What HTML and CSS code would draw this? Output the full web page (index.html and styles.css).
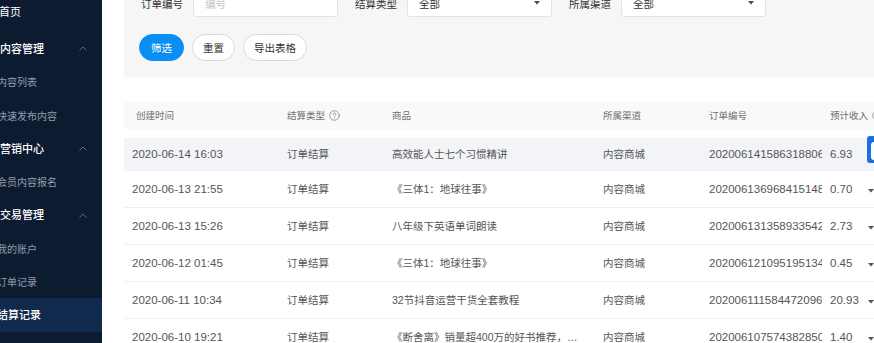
FILE: index.html
```html
<!DOCTYPE html>
<html lang="zh-CN">
<head>
  <meta charset="UTF-8" />
  <meta name="viewport" content="width=device-width, initial-scale=1.0"/>
  <title>结算记录</title>
  <link rel="stylesheet" href="styles.css">
</head>
<body>
  <div class="layout">
    <aside class="sidebar">
      <ul class="menu">
        <li class="menu-home">首页</li>
        <li class="menu-title">内容管理
          <svg class="caret" viewBox="0 0 8 5" width="8" height="5"><polyline points="0.5,4.5 4,1 7.5,4.5" /></svg>
        </li>
        <li class="menu-sub">内容列表</li>
        <li class="menu-sub">快速发布内容</li>
        <li class="menu-title">营销中心
          <svg class="caret" viewBox="0 0 8 5" width="8" height="5"><polyline points="0.5,4.5 4,1 7.5,4.5" /></svg>
        </li>
        <li class="menu-sub">会员内容报名</li>
        <li class="menu-title">交易管理
          <svg class="caret" viewBox="0 0 8 5" width="8" height="5"><polyline points="0.5,4.5 4,1 7.5,4.5" /></svg>
        </li>
        <li class="menu-sub">我的账户</li>
        <li class="menu-sub">订单记录</li>
        <li class="menu-sub active">结算记录</li>
        <li class="menu-sub">提现记录</li>
      </ul>
    </aside>

    <main class="main">
      <section class="filter-panel">
        <div class="filter-row">
          <div class="field">
            <label>订单编号</label>
            <input type="text" class="control" placeholder="编号" />
          </div>
          <div class="field">
            <label>结算类型</label>
            <div class="control select">全部
              <svg class="arrow" viewBox="0 0 6 4" width="6" height="4"><polygon points="0,0 6,0 3,3.6" /></svg>
            </div>
          </div>
          <div class="field">
            <label>所属渠道</label>
            <div class="control select">全部
              <svg class="arrow" viewBox="0 0 6 4" width="6" height="4"><polygon points="0,0 6,0 3,3.6" /></svg>
            </div>
          </div>
        </div>
        <div class="filter-actions">
          <button class="btn btn-primary">筛选</button>
          <button class="btn">重置</button>
          <button class="btn">导出表格</button>
        </div>
      </section>

      <table class="records">
        <colgroup>
          <col style="width:155px">
          <col style="width:105px">
          <col style="width:211px">
          <col style="width:106px">
          <col style="width:121px">
          <col style="width:41px">
          <col style="width:60px">
        </colgroup>
        <thead>
          <tr>
            <th class="first">创建时间</th>
            <th>结算类型
              <svg class="help" viewBox="0 0 12 12" width="11" height="11"><circle cx="6" cy="6" r="5.2" /><path d="M4.5 4.8a1.5 1.5 0 1 1 2.2 1.3c-.5.3-.7.5-.7 1.1v.3" /><circle class="dot" cx="6" cy="8.9" r="0.55" /></svg>
            </th>
            <th>商品</th>
            <th>所属渠道</th>
            <th>订单编号</th>
            <th class="spill">预计收入
              <svg class="help" viewBox="0 0 12 12" width="11" height="11"><circle cx="6" cy="6" r="5.2" /><path d="M4.5 4.8a1.5 1.5 0 1 1 2.2 1.3c-.5.3-.7.5-.7 1.1v.3" /><circle class="dot" cx="6" cy="8.9" r="0.55" /></svg>
            </th>
            <th></th>
          </tr>
        </thead>
        <tbody>
          <tr class="hover">
            <td class="num">2020-06-14 16:03</td>
            <td>订单结算</td>
            <td class="product">高效能人士七个习惯精讲</td>
            <td>内容商城</td>
            <td class="num">20200614158631880612</td>
            <td class="num">6.93</td>
            <td class="op"><span class="op-btn"><span></span></span></td>
          </tr>
          <tr>
            <td class="num">2020-06-13 21:55</td>
            <td>订单结算</td>
            <td class="product">《三体1：地球往事》</td>
            <td>内容商城</td>
            <td class="num">20200613696841514862</td>
            <td class="num">0.70</td>
            <td class="op"><svg class="more" viewBox="0 0 6 4" width="6" height="4"><polygon points="0,0 6,0 3,3.6" /></svg></td>
          </tr>
          <tr>
            <td class="num">2020-06-13 15:26</td>
            <td>订单结算</td>
            <td class="product">八年级下英语单词朗读</td>
            <td>内容商城</td>
            <td class="num">20200613135893354271</td>
            <td class="num">2.73</td>
            <td class="op"><svg class="more" viewBox="0 0 6 4" width="6" height="4"><polygon points="0,0 6,0 3,3.6" /></svg></td>
          </tr>
          <tr>
            <td class="num">2020-06-12 01:45</td>
            <td>订单结算</td>
            <td class="product">《三体1：地球往事》</td>
            <td>内容商城</td>
            <td class="num">202006121095195134</td>
            <td class="num">0.45</td>
            <td class="op"><svg class="more" viewBox="0 0 6 4" width="6" height="4"><polygon points="0,0 6,0 3,3.6" /></svg></td>
          </tr>
          <tr>
            <td class="num">2020-06-11 10:34</td>
            <td>订单结算</td>
            <td class="product">32节抖音运营干货全套教程</td>
            <td>内容商城</td>
            <td class="num">202006111584472096</td>
            <td class="num">20.93</td>
            <td class="op"><svg class="more" viewBox="0 0 6 4" width="6" height="4"><polygon points="0,0 6,0 3,3.6" /></svg></td>
          </tr>
          <tr>
            <td class="num">2020-06-10 19:21</td>
            <td>订单结算</td>
            <td class="product">《断舍离》销量超400万的好书推荐，读完人生更轻松</td>
            <td>内容商城</td>
            <td class="num">20200610757438285031</td>
            <td class="num">1.40</td>
            <td class="op"><svg class="more" viewBox="0 0 6 4" width="6" height="4"><polygon points="0,0 6,0 3,3.6" /></svg></td>
          </tr>
        </tbody>
      </table>
    </main>
  </div>
</body>
</html>
```

FILE: styles.css
```css
* {
  box-sizing: border-box;
}

body {
  margin: 0;
  background: #fff;
  color: #555;
  font-family: "Liberation Sans", "Noto Sans CJK SC", sans-serif;
  overflow: hidden;
}

.layout {
  display: flex;
  height: 100vh;
}

/* sidebar */
.sidebar {
  width: 102px;
  flex-shrink: 0;
  background: #0d1b31;
  overflow: hidden;
  font-family: "Noto Sans CJK SC", sans-serif;
}

.menu {
  list-style: none;
  margin: -8px 0 0;
  padding: 0;
}

.menu li {
  height: 33.3px;
  line-height: 33.3px;
  white-space: nowrap;
}

.menu li.menu-home {
  height: 40px;
  line-height: 38px;
  color: #fff;
  font-size: 11px;
  text-indent: -1px;
}

.menu-title {
  display: flex;
  align-items: center;
  justify-content: space-between;
  padding-right: 15px;
  color: #fff;
  font-size: 11px;
  font-weight: 500;
}

.caret {
  fill: none;
  stroke: #5f6b7e;
  stroke-width: 1;
}

.menu-sub {
  color: #939cab;
  font-size: 10px;
  text-indent: -3px;
}

.menu-sub.active {
  background: #0f2a4d;
  color: #fff;
  font-size: 11px;
  font-weight: 500;
}

/* main area */
.main {
  flex: 1;
  min-width: 0;
  overflow: hidden;
  padding-left: 22px;
}

.filter-panel {
  margin-top: -11px;
  padding: 0 0 16px 15px;
  background: #f6f6f7;
}

.filter-row {
  display: flex;
  gap: 15px;
}

.field {
  display: flex;
  align-items: center;
  gap: 10px;
}

.field label {
  width: 44px;
  text-align: right;
  color: #333;
  font-size: 10.5px;
  font-family: "Noto Sans CJK SC", sans-serif;
}

.control {
  width: 145px;
  height: 28px;
  border: 1px solid #e4e4e6;
  border-radius: 3px;
  background: #fff;
  font-family: "Noto Sans CJK SC", sans-serif;
  font-size: 10.5px;
  color: #333;
  padding: 0 11px;
}

.control::placeholder {
  color: #c4c6cc;
}

.select {
  display: flex;
  align-items: center;
  justify-content: space-between;
}

.arrow {
  fill: #4a4a4a;
}

.filter-actions {
  display: flex;
  gap: 8px;
  margin-top: 17px;
}

.btn {
  height: 27px;
  padding: 0 10px;
  border: 1px solid #d9d9dc;
  border-radius: 14px;
  background: #fff;
  color: #333;
  font-family: "Noto Sans CJK SC", sans-serif;
  font-size: 10.5px;
  cursor: pointer;
}

.btn-primary {
  padding: 0 11px;
  background: #0b8ef4;
  border-color: #0b8ef4;
  color: #fff;
}

/* table */
.records {
  width: 799px;
  margin-top: 25px;
  table-layout: fixed;
  border-collapse: collapse;
}

.records th {
  height: 31px;
  padding: 0 0 0 8px;
  background: #f9f9fa;
  border-bottom: 9px solid #fff;
  color: #6f6f72;
  font-family: "Noto Sans CJK SC", sans-serif;
  font-size: 9.5px;
  font-weight: 400;
  text-align: left;
  white-space: nowrap;
  overflow: hidden;
}

.records th.first {
  padding-left: 12px;
}

.records th.spill {
  overflow: visible;
}

.help {
  vertical-align: -2px;
  margin-left: 2px;
  fill: none;
  stroke: #8a8a8d;
  stroke-width: 0.9;
  stroke-linecap: round;
}

.help .dot {
  fill: #8a8a8d;
  stroke: none;
}

.records td {
  height: 37px;
  padding: 0 0 0 8px;
  border-bottom: 1px solid #efeff1;
  font-size: 10.5px;
  color: #555;
  white-space: nowrap;
  overflow: hidden;
}

.records td.num {
  font-size: 11.5px;
}

.records td.product {
  padding-right: 15px;
  text-overflow: ellipsis;
}

.records tr.hover td {
  background: #f3f4f8;
}

.records td.op {
  position: relative;
  overflow: visible;
  padding-left: 5px;
}

.more {
  fill: #555;
}

.op-btn {
  position: absolute;
  top: -2px;
  left: 4px;
  width: 40px;
  height: 27px;
  padding: 6px 0 3px 4px;
  border-radius: 3px;
  background: #1d6fdd;
}

.op-btn span {
  display: block;
  height: 100%;
  border-radius: 3px;
  background: #fff;
}
```
